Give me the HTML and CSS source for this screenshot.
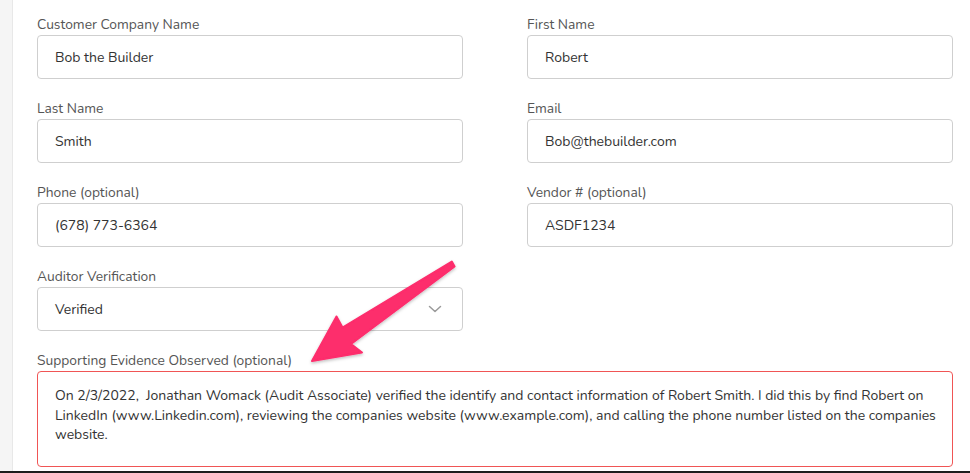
FILE: index.html
```html
<!DOCTYPE html>
<html>
<head>
<meta charset="utf-8">
<link rel="stylesheet" href="styles.css">
</head>
<body>
<div class="frame">
  <div class="sidebar"></div>
  <main class="content">
    <form class="form-grid">
      <div class="field">
        <label class="field-label">Customer Company Name</label>
        <div class="input">Bob the Builder</div>
      </div>
      <div class="field">
        <label class="field-label">First Name</label>
        <div class="input">Robert</div>
      </div>
      <div class="field">
        <label class="field-label">Last Name</label>
        <div class="input">Smith</div>
      </div>
      <div class="field">
        <label class="field-label">Email</label>
        <div class="input">Bob@thebuilder.com</div>
      </div>
      <div class="field">
        <label class="field-label">Phone (optional)</label>
        <div class="input">(678) 773-6364</div>
      </div>
      <div class="field">
        <label class="field-label">Vendor # (optional)</label>
        <div class="input">ASDF1234</div>
      </div>
      <div class="field">
        <label class="field-label">Auditor Verification</label>
        <div class="input select">
          <span>Verified</span>
          <svg class="chevron" width="14" height="8" viewBox="0 0 14 8"><path d="M1.5 1.5 L7 6.5 L12.5 1.5" fill="none" stroke="#9a9a9a" stroke-width="1.5" stroke-linecap="round" stroke-linejoin="round"/></svg>
        </div>
      </div>
      <div class="field"></div>
      <div class="field wide">
        <label class="field-label">Supporting Evidence Observed (optional)</label>
        <div class="input textarea">On 2/3/2022,&nbsp; Jonathan Womack (Audit Associate) verified the identify and contact information of Robert Smith. I did this by find Robert on LinkedIn (www.Linkedin.com), reviewing the companies website (www.example.com), and calling the phone number listed on the companies website.</div>
      </div>
    </form>
  </main>
  <svg class="annotation" width="970" height="473" viewBox="0 0 970 473">
    <defs>
      <filter id="sh" x="-20%" y="-20%" width="140%" height="140%">
        <feDropShadow dx="0" dy="1.5" stdDeviation="1.5" flood-color="#000" flood-opacity="0.25"/>
      </filter>
    </defs>
    <polygon filter="url(#sh)" points="451.8,261.6 342.5,327.5 336.5,316.5 312,361 362,352.5 351,344 454.6,266.4" fill="#fd2d6c" stroke="#fd2d6c" stroke-width="2" stroke-linejoin="round"/>
  </svg>
</div>
</body>
</html>
```
FILE: styles.css
```css
* { box-sizing: border-box; }
html, body { margin: 0; padding: 0; background: #fff; }
body {
  font-family: "Nunito", "Noto Sans", "Lato", sans-serif;
  color: #333;
  width: 970px;
  height: 473px;
  overflow: hidden;
}
.frame {
  position: relative;
  display: flex;
  height: 473px;
  border-bottom: 2px solid #1c1c1c;
}
.sidebar {
  width: 13px;
  flex: none;
  background: #f5f5f5;
  border-right: 1px solid #e8e8e8;
}
.content {
  flex: 1;
  padding: 16px 17px 0 24px;
}
.form-grid {
  display: grid;
  grid-template-columns: 1fr 1fr;
  column-gap: 64px;
  row-gap: 21px;
  margin: 0;
}
.field { display: flex; flex-direction: column; }
.field.wide { grid-column: 1 / span 2; }
.field-label {
  font-size: 13.8px;
  line-height: 18px;
  color: #555;
  margin-bottom: 1px;
}
.input {
  height: 44px;
  border: 1px solid #cfcfcf;
  border-radius: 4px;
  padding: 0 17px;
  display: flex;
  align-items: center;
  font-size: 14px;
  color: #333;
  background: #fff;
}
.select { justify-content: space-between; padding-right: 20px; }
.chevron { display: block; }
.textarea {
  height: 96px;
  display: block;
  border-color: #f05555;
  padding: 14px 10px 12px 17px;
  line-height: 19.5px;
}
.annotation {
  position: absolute;
  left: 0;
  top: 0;
  pointer-events: none;
}
```
